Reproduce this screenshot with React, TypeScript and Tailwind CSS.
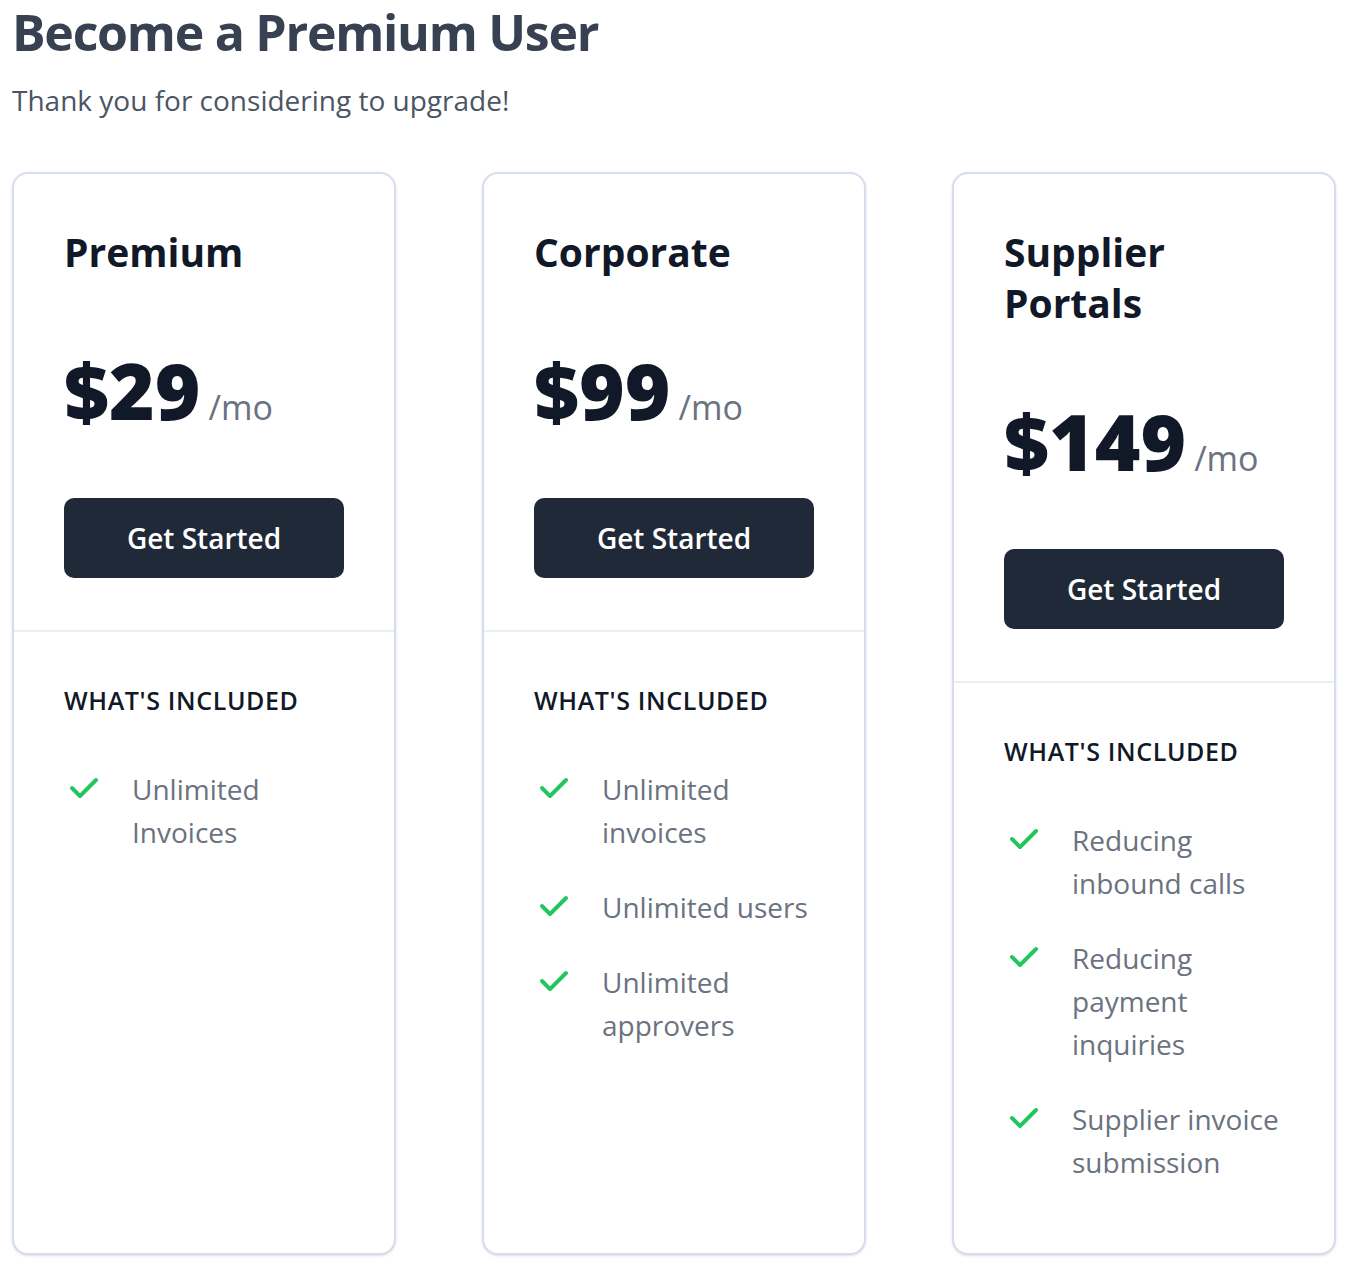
type Plan = {
    name: string;
    price: string;
    features: string[];
};

const plans: Plan[] = [
    { name: 'Premium', price: '$29', features: ['Unlimited Invoices'] },
    { name: 'Corporate', price: '$99', features: ['Unlimited invoices', 'Unlimited users', 'Unlimited approvers'] },
    {
        name: 'Supplier Portals',
        price: '$149',
        features: ['Reducing inbound calls', 'Reducing payment inquiries', 'Supplier invoice submission'],
    },
];

function CheckIcon() {
    return (
        <svg viewBox="0 0 20 20" fill="currentColor" className="w-10 h-10 shrink-0 text-[#22c55e]">
            <path
                fillRule="evenodd"
                d="M16.707 5.293a1 1 0 010 1.414l-8 8a1 1 0 01-1.414 0l-4-4a1 1 0 011.414-1.414L8 12.586l7.293-7.293a1 1 0 011.414 0z"
                clipRule="evenodd"
            />
        </svg>
    );
}

function PlanCard({ plan }: { plan: Plan }) {
    return (
        <div className="border-2 border-[#d5ddf1] rounded-2xl bg-white shadow-sm">
            <div className="px-[50px] pt-[52px] pb-[52px]">
                <h2 className="text-[39px] leading-[51px] font-bold text-[#111827] pr-28">{plan.name}</h2>
                <p className="mt-[73px] flex items-baseline">
                    <span className="text-[78px] leading-[80px] font-extrabold text-[#111827]">{plan.price}</span>
                    <span className="ml-2 text-[34px] font-medium text-[#6b7280]">/mo</span>
                </p>
                <button className="mt-[65px] block w-full bg-[#1f2937] rounded-[10px] py-4 text-[28px] leading-[48px] font-semibold text-white">
                    Get Started
                </button>
            </div>
            <div className="border-t-2 border-[#eceef3] pt-[44px] pb-[69px] px-[50px]">
                <h3 className="text-[25px] leading-[48px] font-semibold text-[#111827] tracking-wide uppercase">
                    What's included
                </h3>
                <ul className="mt-[44px] space-y-8">
                    {plan.features.map((f) => (
                        <li key={f} className="flex gap-7">
                            <CheckIcon />
                            <span className="text-[28px] leading-[43px] text-[#6b7280]">{f}</span>
                        </li>
                    ))}
                </ul>
            </div>
        </div>
    );
}

export default function App() {
    return (
        <div className="bg-white min-h-screen px-3" style={{ fontFamily: '"Open Sans", "Noto Sans", sans-serif' }}>
            <h1 className="text-[50px] leading-[64px] font-bold text-[#374151] tracking-tight">Become a Premium User</h1>
            <p className="mt-[16px] text-[28px] leading-[40px] text-[#4b5563]">Thank you for considering to upgrade!</p>
            <div className="mt-[52px] grid grid-cols-3 gap-[86px] w-[1324px] items-stretch pb-5">
                {plans.map((p) => (
                    <PlanCard key={p.name} plan={p} />
                ))}
            </div>
        </div>
    );
}
